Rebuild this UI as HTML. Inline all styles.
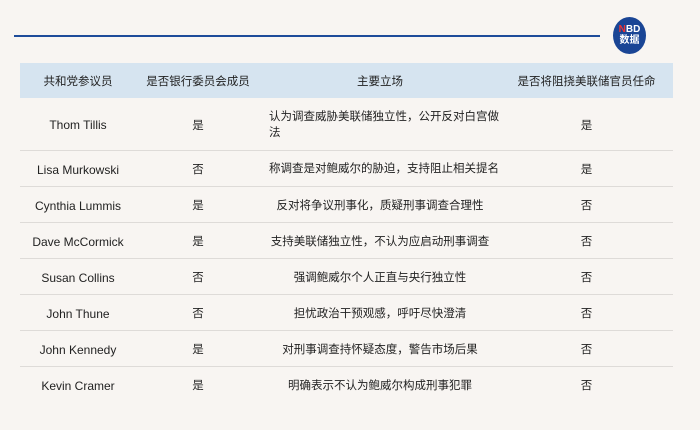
<!DOCTYPE html>
<html><head><meta charset="utf-8"><style>
body{margin:0;width:700px;height:430px;background:#f8f5f2;font-family:"Liberation Sans","Noto Sans CJK SC",sans-serif;color:#222;position:relative;overflow:hidden}
.line{position:absolute;left:14px;top:35px;width:586px;height:2px;background:#1e4c9a}
.logo{position:absolute;left:613px;top:17px;width:33px;height:37px;border-radius:50%;background:#1a4595;color:#fff;text-align:center;font-weight:bold;font-size:10px;line-height:11px;padding-top:7px;box-sizing:border-box}
.logo .n{color:#e33}
table{position:absolute;left:20px;top:63px;width:653px;border-collapse:collapse;font-size:11.5px;table-layout:fixed}
th{background:#d6e4f0;font-weight:normal;height:35px;padding:0}
td{height:36px;border-bottom:1px solid #dedbd8;text-align:center;padding:2px 0 0;box-sizing:border-box;white-space:nowrap}
td:first-child{font-size:12px;padding-top:3px}
td.l{text-align:left;padding-left:9px;line-height:16px;white-space:normal}
</style></head><body>
<div class="line"></div>
<div class="logo"><span class="n">N</span>BD<br>数据</div>
<table>
<colgroup><col style="width:116px"><col style="width:124px"><col style="width:240px"><col></colgroup>
<tr><th>共和党参议员</th><th>是否银行委员会成员</th><th>主要立场</th><th>是否将阻挠美联储官员任命</th></tr>
<tr><td style="height:52px">Thom Tillis</td><td>是</td><td class="l">认为调查威胁美联储独立性，公开反对白宫做法</td><td>是</td></tr>
<tr><td>Lisa Murkowski</td><td>否</td><td class="l" style="white-space:nowrap">称调查是对鲍威尔的胁迫，支持阻止相关提名</td><td>是</td></tr>
<tr><td>Cynthia Lummis</td><td>是</td><td>反对将争议刑事化，质疑刑事调查合理性</td><td>否</td></tr>
<tr><td>Dave McCormick</td><td>是</td><td>支持美联储独立性，不认为应启动刑事调查</td><td>否</td></tr>
<tr><td>Susan Collins</td><td>否</td><td>强调鲍威尔个人正直与央行独立性</td><td>否</td></tr>
<tr><td>John Thune</td><td>否</td><td>担忧政治干预观感，呼吁尽快澄清</td><td>否</td></tr>
<tr><td>John Kennedy</td><td>是</td><td>对刑事调查持怀疑态度，警告市场后果</td><td>否</td></tr>
<tr><td style="border-bottom:none">Kevin Cramer</td><td style="border-bottom:none">是</td><td style="border-bottom:none">明确表示不认为鲍威尔构成刑事犯罪</td><td style="border-bottom:none">否</td></tr>
</table>
</body></html>
